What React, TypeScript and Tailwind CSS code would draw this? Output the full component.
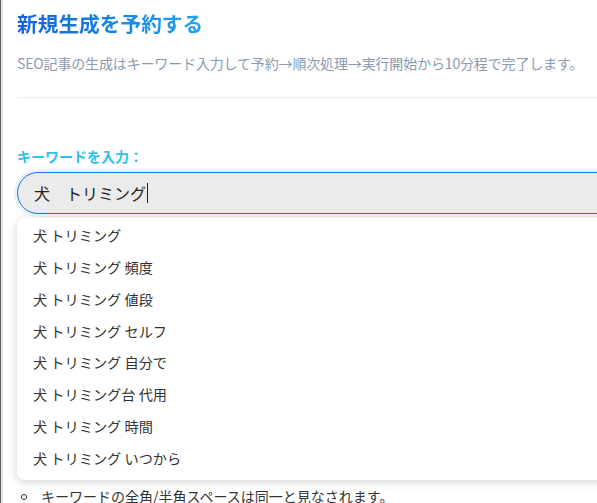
import React from 'react';

const suggestions = [
  '犬 トリミング',
  '犬 トリミング 頻度',
  '犬 トリミング 値段',
  '犬 トリミング セルフ',
  '犬 トリミング 自分で',
  '犬 トリミング台 代用',
  '犬 トリミング 時間',
  '犬 トリミング いつから',
];

export default function App() {
  return (
    <div
      className="h-[503px] w-[597px] overflow-hidden bg-white border-l border-[#5f5f5f]"
      style={{ fontFamily: '"Noto Sans CJK JP", "Noto Sans", sans-serif' }}
    >
      <div className="border-l-2 border-[#e6e6e6] h-full pl-[14px] w-[700px]">
        <h1 className="pt-[6px] text-[20.7px] font-bold leading-[34px] bg-gradient-to-r from-[#1462dc] to-[#22a3f2] bg-clip-text text-transparent w-fit">
          新規生成を予約する
        </h1>
        <p className="mt-[13px] text-[14px] leading-[20px] text-[#8b9ab0] tracking-[-0.15px]">
          SEO記事の生成はキーワード入力して予約→順次処理→実行開始から10分程で完了します。
        </p>
        <div className="mt-[24px] border-t border-[#eeeeee]" />

        <label className="block mt-[48px] text-[14px] font-bold leading-[20px] text-[#2cc2e8]">
          キーワードを入力：
        </label>
        <div className="mt-[6px] flex h-[42px] items-center rounded-l-full border border-[#1a73e8] bg-[#ebebeb] pl-[16px] shadow-[0_0_0_3px_rgba(66,153,225,0.12)]">
          <span className="text-[16px] text-[#222]">犬　トリミング</span>
          <span className="ml-[1px] h-[20px] w-px bg-[#222]" />
        </div>

        <div className="relative">
          <ul className="absolute left-0 top-[4px] w-[640px] rounded-[8px] bg-white pt-[2px] pb-[6px] shadow-[0_2px_10px_rgba(0,0,0,0.18)]">
            {suggestions.map((s) => (
              <li key={s} className="h-[31.8px] flex items-center pl-[16px] text-[14.2px] text-[#333]">
                {s}
              </li>
            ))}
          </ul>
        </div>

        <ul className="mt-[272px]">
          <li className="flex items-center text-[14px] text-[#333]">
            <span className="ml-[4px] mr-[14px] inline-block h-[6px] w-[6px] rounded-full border border-[#333]" />
            キーワードの全角/半角スペースは同一と見なされます。
          </li>
        </ul>
      </div>
    </div>
  );
}
